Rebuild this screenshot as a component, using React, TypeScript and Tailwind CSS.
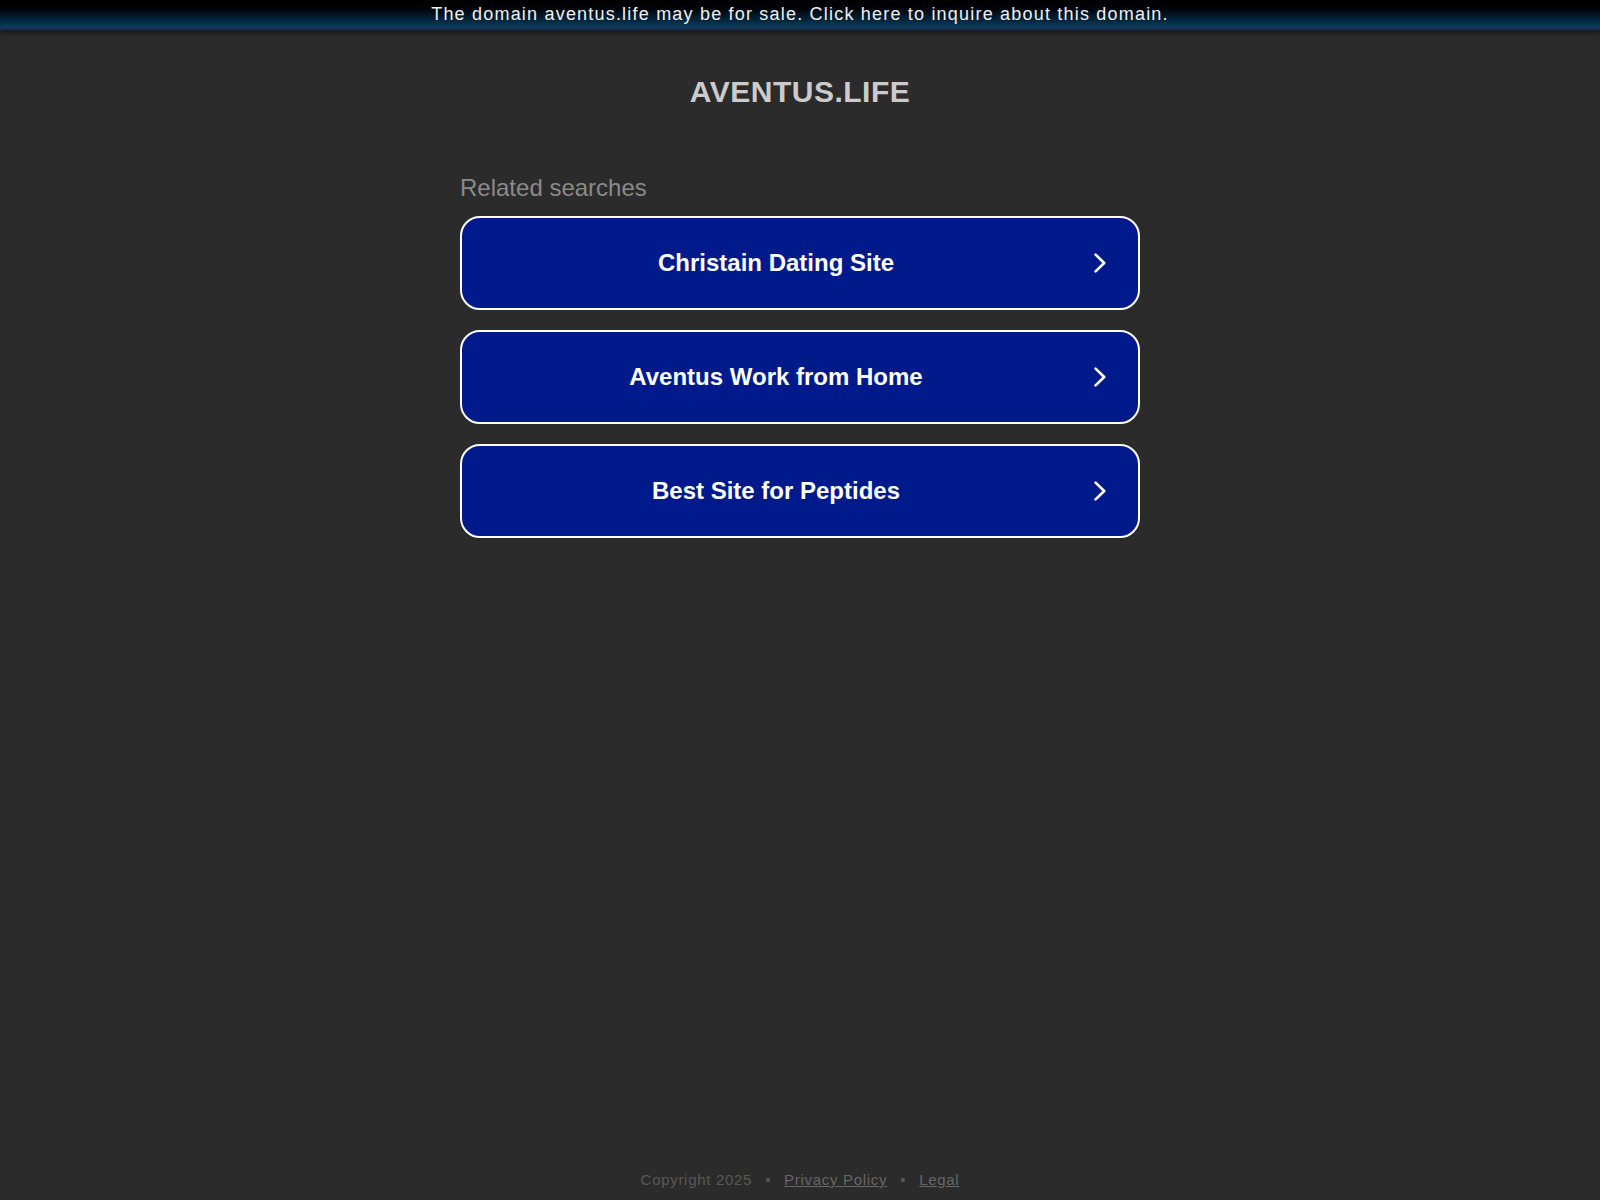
import React from "react";

const items = ["Christain Dating Site", "Aventus Work from Home", "Best Site for Peptides"];

function Chevron() {
  return (
    <svg width="12" height="20" viewBox="0 0 12 20" className="shrink-0 ml-[4px]" aria-hidden="true">
      <path d="M1.6 1.6 L10.2 10 L1.6 18.4" fill="none" stroke="#ffffff" strokeWidth="2.6" strokeLinecap="round" strokeLinejoin="round" />
    </svg>
  );
}

export default function App() {
  return (
    <div className="min-h-screen flex flex-col bg-[#2b2b2b] font-['Liberation_Sans',Arial,sans-serif]">
      <div className="relative z-10 h-[30px] bg-gradient-to-b from-[#000000] to-[#0a4060] border-b-2 border-[#09334d] shadow-[0_2px_6px_rgba(0,0,0,0.6)] flex items-center justify-center">
        <span className="text-[18px] leading-[28px] tracking-[1.2px] text-[#f0f0f0] cursor-pointer">
          The domain aventus.life may be for sale. Click here to inquire about this domain.
        </span>
      </div>

      <h1 className="mt-[45px] text-center text-[30px] leading-[34px] font-bold tracking-[0.5px] text-[#cbcbcb]">AVENTUS.LIFE</h1>

      <div className="w-[680px] mx-auto mt-[65px]">
        <div className="text-[24px] leading-[27px] text-[#8a8a8a]">Related searches</div>
        <div className="mt-[15px] flex flex-col gap-[20px]">
          {items.map((t) => (
            <a
              key={t}
              className="h-[94px] flex items-center rounded-[20px] border-2 border-white bg-[#011a8b] pr-[32px] cursor-pointer"
            >
              <span className="flex-1 text-center text-[24px] font-bold text-white">{t}</span>
              <Chevron />
            </a>
          ))}
        </div>
      </div>

      <div className="mt-auto pb-[12px] flex justify-center items-baseline text-[15px] leading-[17px] tracking-[0.7px]">
        <span className="text-[#585858]">Copyright 2025</span>
        <span className="text-[#585858] px-[13px]">•</span>
        <a className="text-[#666666] underline cursor-pointer">Privacy Policy</a>
        <span className="text-[#585858] px-[13px]">•</span>
        <a className="text-[#666666] underline cursor-pointer">Legal</a>
      </div>
    </div>
  );
}
